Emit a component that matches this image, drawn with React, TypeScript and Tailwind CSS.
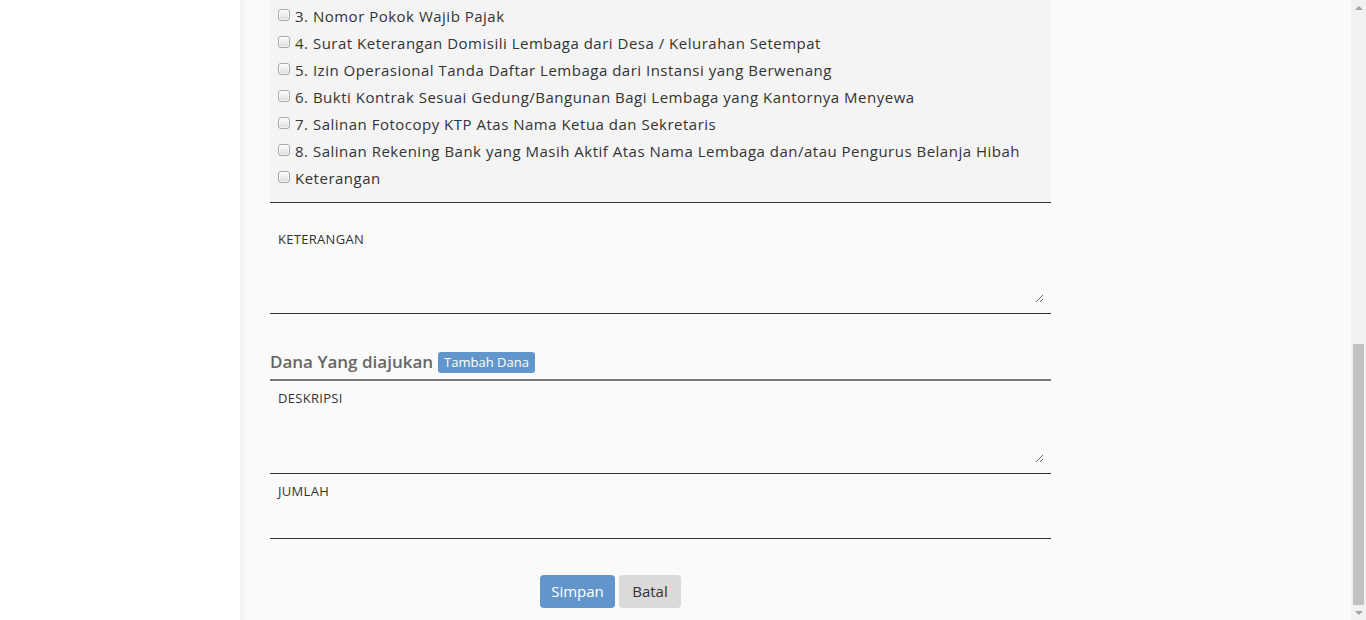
import React from "react";

const documents = [
  "3. Nomor Pokok Wajib Pajak",
  "4. Surat Keterangan Domisili Lembaga dari Desa / Kelurahan Setempat",
  "5. Izin Operasional Tanda Daftar Lembaga dari Instansi yang Berwenang",
  "6. Bukti Kontrak Sesuai Gedung/Bangunan Bagi Lembaga yang Kantornya Menyewa",
  "7. Salinan Fotocopy KTP Atas Nama Ketua dan Sekretaris",
  "8. Salinan Rekening Bank yang Masih Aktif Atas Nama Lembaga dan/atau Pengurus Belanja Hibah",
  "Keterangan",
];

const CheckBox = () => (
  <span className="inline-block w-[12px] h-[12px] rounded-[3px] border border-[#a9a9a9] bg-gradient-to-b from-[#fdfdfd] to-[#dcdcdc] shadow-[inset_0_0_0_1px_rgba(255,255,255,0.6)]" />
);

const FieldLabel = ({ children }: { children: React.ReactNode }) => (
  <label className="block text-[13px] leading-[18px] text-[#333] tracking-[0.3px]">{children}</label>
);

// fake browser scrollbar, the reference is scrolled to the bottom
const ScrollBar = () => (
  <div className="w-[15px] shrink-0 bg-[#f1f1f1] flex flex-col items-center">
    <div className="h-[15px] flex items-center justify-center">
      <span className="w-0 h-0 border-x-[4px] border-x-transparent border-b-[4px] border-b-[#a3a3a3]" />
    </div>
    <div className="flex-1 w-full flex flex-col justify-end px-[2px]">
      <div className="h-[261px] bg-[#c1c1c1]" />
    </div>
    <div className="h-[15px] flex items-center justify-center">
      <span className="w-0 h-0 border-x-[4px] border-x-transparent border-t-[4px] border-t-[#a3a3a3]" />
    </div>
  </div>
);

export default function App() {
  return (
    <div className="h-screen flex bg-white overflow-hidden" style={{ fontFamily: '"Open Sans", "Liberation Sans", sans-serif' }}>
      <aside className="w-[240px] shrink-0 bg-white" />
      <main className="flex-1 bg-[#fafafa] shadow-[inset_8px_0_8px_-6px_rgba(0,0,0,0.05)] pl-[30px] pb-[12px]">
        <div className="w-[781px]">
          <div className="bg-[#f4f4f4] border-b border-[#333] pl-[8px] pt-[3px] pb-[10px]">
            {documents.map((doc) => (
              <label key={doc} className="flex items-center gap-[5px] h-[27px] text-[15px] text-[#333] tracking-[0.5px]">
                <span className="-mt-[3px] flex"><CheckBox /></span>
                {doc}
              </label>
            ))}
          </div>

          <div className="border-b border-[#333] pt-[27px] pl-[8px] pr-[7px] pb-[10px]">
            <FieldLabel>KETERANGAN</FieldLabel>
            <textarea className="block w-full h-[55px] resize-y bg-transparent outline-none" />
          </div>

          <div className="mt-[36px] flex items-end gap-[5px] pb-[5px] border-b-2 border-[#777]">
            <h3 className="text-[17px] leading-[24px] font-semibold text-[#666]">Dana Yang diajukan</h3>
            <button type="button" className="mb-[1px] bg-[#6196cc] text-white text-[13px] leading-[21px] px-[6px] rounded-[3px]">
              Tambah Dana
            </button>
          </div>

          <div className="border-b border-[#333] pt-[8px] pl-[8px] pr-[7px] pb-[10px]">
            <FieldLabel>DESKRIPSI</FieldLabel>
            <textarea className="block w-full h-[56px] resize-y bg-transparent outline-none" />
          </div>

          <div className="border-b border-[#333] pt-[8px] pl-[8px] pr-[7px] pb-[10px]">
            <FieldLabel>JUMLAH</FieldLabel>
            <input type="text" className="block w-full h-[28px] bg-transparent outline-none" />
          </div>

          <div className="mt-[36px] pl-[270px] flex gap-[4px]">
            <button type="button" className="w-[75px] h-[33px] rounded-[4px] bg-[#6395cd] text-white text-[15px]">Simpan</button>
            <button type="button" className="w-[62px] h-[33px] rounded-[4px] bg-[#dadada] text-[#333] text-[15px]">Batal</button>
          </div>
        </div>
      </main>
      <ScrollBar />
    </div>
  );
}
